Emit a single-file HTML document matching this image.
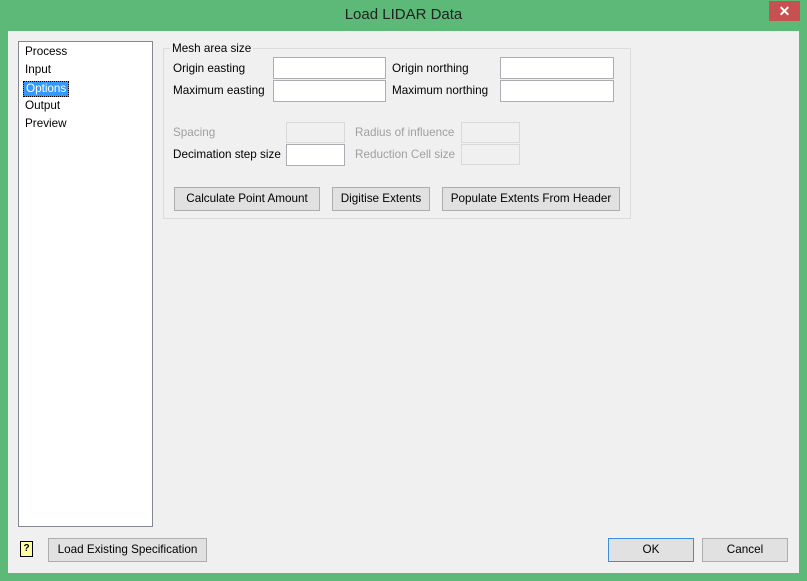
<!DOCTYPE html>
<html><head><style>
*{box-sizing:border-box;margin:0;padding:0}
body{width:807px;height:581px;background:#5cb978;font-family:"Liberation Sans",sans-serif;font-size:11.7px;color:#000;position:relative;overflow:hidden}
.a{position:absolute}
.client{left:8px;top:31px;width:791px;height:542px;background:#f0f0f0}
.title{left:0;top:6px;width:807px;text-align:center;font-size:15px;color:#222}
.close{left:769px;top:1px;width:31px;height:20px;background:#c75050;color:#fff;text-align:center;font-size:14px;line-height:20px;font-weight:bold}
.list{left:18px;top:41px;width:135px;height:486px;background:#fff;border:1px solid #828790}
.li{left:6px}
.inp{background:#fff;border:1px solid #abadb3}
.dis{background:#f0f0f0;border:1px solid #d9d9d9}
.g{color:#a0a0a0}
.btn{background:#e1e1e1;border:1px solid #adadad;text-align:center;line-height:22px}
.group{left:163px;top:48px;width:468px;height:171px;border:1px solid #dcdcdc}
</style></head><body>
<div class="a title">Load LIDAR Data</div>
<div class="a close">✕</div>
<div class="a client"></div>
<div class="a list">
<div class="a li" style="top:3px">Process</div>
<div class="a li" style="top:21px">Input</div>
<div class="a" style="left:4px;top:39px;width:46px;height:16px;background:#3399ff;color:#fff;border:1px dotted #000;padding-left:2px;line-height:14px">Options</div>
<div class="a li" style="top:57px">Output</div>
<div class="a li" style="top:75px">Preview</div>
</div>
<div class="a group"></div>
<div class="a" style="left:170px;top:42px;background:#f0f0f0;padding:0 2px">Mesh area size</div>
<div class="a" style="left:173px;top:62px">Origin easting</div>
<div class="a inp" style="left:273px;top:57px;width:113px;height:22px"></div>
<div class="a" style="left:173px;top:84px">Maximum easting</div>
<div class="a inp" style="left:273px;top:80px;width:113px;height:22px"></div>
<div class="a" style="left:392px;top:62px">Origin northing</div>
<div class="a inp" style="left:500px;top:57px;width:114px;height:22px"></div>
<div class="a" style="left:392px;top:84px">Maximum northing</div>
<div class="a inp" style="left:500px;top:80px;width:114px;height:22px"></div>
<div class="a g" style="left:173px;top:126px">Spacing</div>
<div class="a dis" style="left:286px;top:122px;width:59px;height:21px"></div>
<div class="a" style="left:173px;top:148px">Decimation step size</div>
<div class="a inp" style="left:286px;top:144px;width:59px;height:22px"></div>
<div class="a g" style="left:355px;top:126px">Radius of influence</div>
<div class="a dis" style="left:461px;top:122px;width:59px;height:21px"></div>
<div class="a g" style="left:355px;top:148px">Reduction Cell size</div>
<div class="a dis" style="left:461px;top:144px;width:59px;height:21px"></div>
<div class="a btn" style="left:174px;top:187px;width:146px;height:24px">Calculate Point Amount</div>
<div class="a btn" style="left:332px;top:187px;width:98px;height:24px">Digitise Extents</div>
<div class="a btn" style="left:442px;top:187px;width:178px;height:24px">Populate Extents From Header</div>
<div class="a" style="left:20px;top:541px;width:13px;height:16px;background:#ffffa0;border:1px solid #000;font-size:10px;text-align:center;line-height:14px;font-weight:bold">?</div>
<div class="a btn" style="left:48px;top:538px;width:159px;height:24px">Load Existing Specification</div>
<div class="a btn" style="left:608px;top:538px;width:86px;height:24px;border-color:#3c8fe0">OK</div>
<div class="a btn" style="left:702px;top:538px;width:86px;height:24px">Cancel</div>
</body></html>
